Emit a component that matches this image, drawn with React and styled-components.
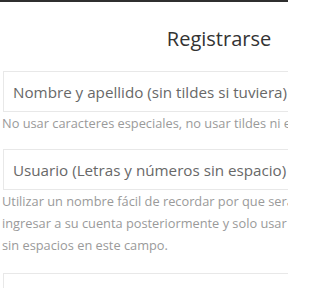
import React from "react";
import styled, { createGlobalStyle } from "styled-components";

const Global = createGlobalStyle`
  html, body {
    margin: 0;
    padding: 0;
    background: #ffffff;
    overflow: hidden;
  }
  body {
    font-family: "Open Sans", "Liberation Sans", sans-serif;
  }
`;

const Page = styled.div`
  width: 288px;
  height: 288px;
  overflow: hidden;
  border-top: 2px solid #2f2f2f;
  box-sizing: border-box;
`;

const Form = styled.form`
  width: 432px;
  margin-left: 3px;
  display: flex;
  flex-direction: column;
`;

const Title = styled.h2`
  margin: 0;
  padding-top: 23px;
  height: 46px;
  text-align: center;
  font-family: "Open Sans", sans-serif;
  font-weight: 400;
  font-size: 20px;
  color: #333;
`;

const Field = styled.div`
  display: flex;
  flex-direction: column;
  margin-bottom: ${(p) => p.gap || 0}px;
`;

const Input = styled.input`
  box-sizing: border-box;
  width: 100%;
  height: 41px;
  border: 1px solid #e8e8e8;
  padding: 0 9px;
  font-family: "Open Sans", sans-serif;
  font-size: 15.2px;
  color: #555;
  outline: none;
  &::placeholder {
    color: #686868;
  }
`;

const Help = styled.p`
  margin: 0 0 0 -1px;
  font-family: "Open Sans", sans-serif;
  font-size: 12.8px;
  line-height: 22px;
  color: #9a9a9a;
  white-space: nowrap;
`;

export default function App() {
  return (
    <Page>
      <Global />
      <Form>
        <Title>Registrarse</Title>
        <Field gap={15}>
          <Input placeholder="Nombre y apellido (sin tildes si tuviera)" />
          <Help>No usar caracteres especiales, no usar tildes ni eñes.</Help>
        </Field>
        <Field gap={17}>
          <Input placeholder="Usuario (Letras y números sin espacio)" />
          <Help>
            Utilizar un nombre fácil de recordar por que será necesario para
            <br />
            ingresar a su cuenta posteriormente y solo usar letras y números
            <br />
            sin espacios en este campo.
          </Help>
        </Field>
        <Field>
          <Input type="password" placeholder="Contraseña" />
        </Field>
      </Form>
    </Page>
  );
}
